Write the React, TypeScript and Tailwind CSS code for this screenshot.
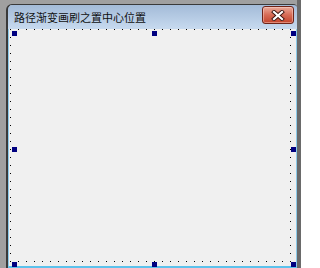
const handles = [
  [12, 31],
  [152, 31],
  [291, 31],
  [12, 147],
  [291, 147],
  [12, 262],
  [152, 262],
  [291, 262],
]

function CloseButton() {
  return (
    <div className="flex h-[18px] w-[32px] items-center justify-center rounded-[3px] border border-[#6e2419] bg-gradient-to-b from-[#eaa999] via-[#d66a55] to-[#c2432c] shadow-[inset_0_0_0_1px_rgba(255,220,210,0.45)]">
      <svg width="14" height="11" viewBox="0 0 14 11">
        <path d="M3 2 L11 9 M11 2 L3 9" stroke="#3b1410" strokeWidth="4" strokeLinecap="square" />
        <path d="M3 2 L11 9 M11 2 L3 9" stroke="#ffffff" strokeWidth="2.2" strokeLinecap="square" />
      </svg>
    </div>
  )
}

export default function App() {
  return (
    <div className="relative flex h-[268px] w-[301px] overflow-hidden bg-[#a0a0a0] pl-[6px] font-['Noto_Sans_CJK_SC',sans-serif]">
      <div className="flex flex-1 flex-col pt-1">
        <div className="flex flex-1 flex-col overflow-hidden rounded-tl-[6px] rounded-tr-[4px] border-t border-l-2 border-[#3a3a3a]">
          <div className="flex h-[24px] items-start justify-between bg-gradient-to-b from-[#a3bbd8] to-[#c7daef] pt-[1px] pr-[3px] pl-[6px]">
            <span className="mt-[4px] text-[11px] leading-[14px] text-[#101010]">
              路径渐变画刷之置中心位置
            </span>
            <CloseButton />
          </div>
          <div className="flex-1 border-x border-b-2 border-x-[#8ccbea] border-b-[#5cc2ec] bg-[#f0f0f0]" />
        </div>
      </div>
      <div className="w-[4px] bg-[#6a6a6a]" />

      <svg className="pointer-events-none absolute inset-0" width="301" height="268" shapeRendering="crispEdges">
        <g stroke="#000000" strokeWidth="1" strokeDasharray="1 7">
          <line x1="10" y1="29.5" x2="291" y2="29.5" />
          <line x1="10" y1="261.5" x2="291" y2="261.5" />
          <line x1="10.5" y1="29" x2="10.5" y2="262" />
          <line x1="290.5" y1="29" x2="290.5" y2="262" />
        </g>
      </svg>
      {handles.map(([x, y]) => (
        <div
          key={`${x}-${y}`}
          className="absolute h-[5px] w-[5px] bg-[#000080]"
          style={{ left: x, top: y }}
        />
      ))}
    </div>
  )
}
